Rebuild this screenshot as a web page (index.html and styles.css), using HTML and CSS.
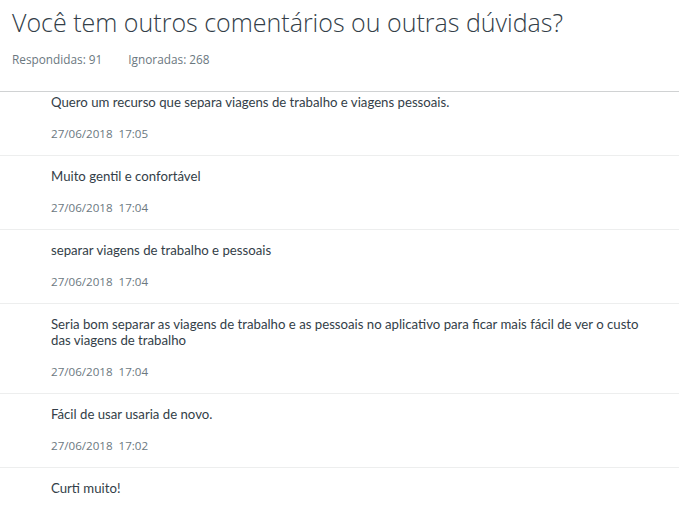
FILE: index.html
```html
<!DOCTYPE html>
<html lang="pt-BR">
<head>
    <meta charset="UTF-8">
    <meta name="viewport" content="width=device-width, initial-scale=1.0">
    <title>Comentários</title>
    <link rel="stylesheet" href="styles.css">
</head>
<body>

    <div class="question-header">
        <h1 class="question-title">Você tem outros comentários ou outras dúvidas?</h1>
        <div class="question-stats">
            <span>Respondidas: 91</span>
            <span>Ignoradas: 268</span>
        </div>
    </div>

    <div class="response-list">
        <div class="response-row">
            <div class="response-text">Quero um recurso que separa viagens de trabalho e viagens pessoais.</div>
            <div class="response-date">27/06/2018&nbsp; 17:05</div>
        </div>
        <div class="response-row">
            <div class="response-text">Muito gentil e confortável</div>
            <div class="response-date">27/06/2018&nbsp; 17:04</div>
        </div>
        <div class="response-row">
            <div class="response-text">separar viagens de trabalho e pessoais</div>
            <div class="response-date">27/06/2018&nbsp; 17:04</div>
        </div>
        <div class="response-row">
            <div class="response-text">Seria bom separar as viagens de trabalho e as pessoais no aplicativo para ficar mais fácil de ver o custo das viagens de trabalho</div>
            <div class="response-date">27/06/2018&nbsp; 17:04</div>
        </div>
        <div class="response-row">
            <div class="response-text">Fácil de usar usaria de novo.</div>
            <div class="response-date">27/06/2018&nbsp; 17:02</div>
        </div>
        <div class="response-row">
            <div class="response-text">Curti muito!</div>
            <div class="response-date">27/06/2018&nbsp; 17:01</div>
        </div>
    </div>

</body>
</html>
```

FILE: styles.css
```css
body {
    font-family: "Open Sans", Arial, sans-serif;
    background-color: #fff;
    color: #333e48;
    margin: 0;
    padding: 0;
}

.question-header {
    padding: 5px 12px 0;
    height: 86px;
    border-bottom: 1px solid #d0d2d3;
}

.question-title {
    font-size: 25px;
    font-weight: 300;
    line-height: 34px;
    color: #333e48;
    margin: 0;
}

.question-stats {
    display: flex;
    gap: 26px;
    margin-top: 12px;
    font-size: 11.8px;
    line-height: 16px;
    color: #6b787f;
}

.response-row {
    padding: 12px 20px 13px 51px;
    border-bottom: 1px solid #edeeee;
}

.response-row:first-child {
    padding-top: 2px;
}

.response-text {
    font-family: Lato, "Open Sans", sans-serif;
    font-size: 13.2px;
    line-height: 16px;
}

.response-date {
    margin-top: 16px;
    font-size: 11.6px;
    line-height: 16px;
    color: #6b787f;
}

.response-text + .response-date {
    margin-top: 16px;
}
```
